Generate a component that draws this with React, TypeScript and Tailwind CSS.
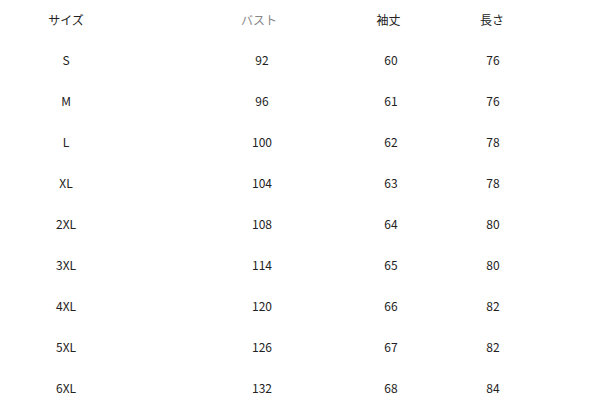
const rows = [
  ["S", "92", "60", "76"],
  ["M", "96", "61", "76"],
  ["L", "100", "62", "78"],
  ["XL", "104", "63", "78"],
  ["2XL", "108", "64", "80"],
  ["3XL", "114", "65", "80"],
  ["4XL", "120", "66", "82"],
  ["5XL", "126", "67", "82"],
  ["6XL", "132", "68", "84"],
];

function Row({ cells, head }: { cells: string[]; head?: boolean }) {
  return (
    <div className={"flex items-center " + (head ? "h-[39px]" : "h-[41px]")}>
      <div className="w-[132px] text-center text-[#222]">{cells[0]}</div>
      <div className={"ml-[80px] w-[100px] text-center " + (head ? "text-[#888] pr-[6px]" : "text-[#222]")}>{cells[1]}</div>
      <div className={"ml-[29px] w-[100px] text-center text-[#222] " + (head ? "pr-[5px]" : "")}>{cells[2]}</div>
      <div className={"ml-[2px] w-[100px] text-center text-[#222] " + (head ? "pr-[2px]" : "")}>{cells[3]}</div>
    </div>
  );
}

export default function App() {
  return (
    <div
      className="w-[592px] h-[412px] bg-white text-[12px] leading-none"
      style={{ fontFamily: '"Noto Sans CJK JP", "Noto Sans", sans-serif' }}
    >
      <Row cells={["サイズ", "バスト", "袖丈", "長さ"]} head />
      {rows.map((r) => (
        <Row key={r[0]} cells={r} />
      ))}
    </div>
  );
}
